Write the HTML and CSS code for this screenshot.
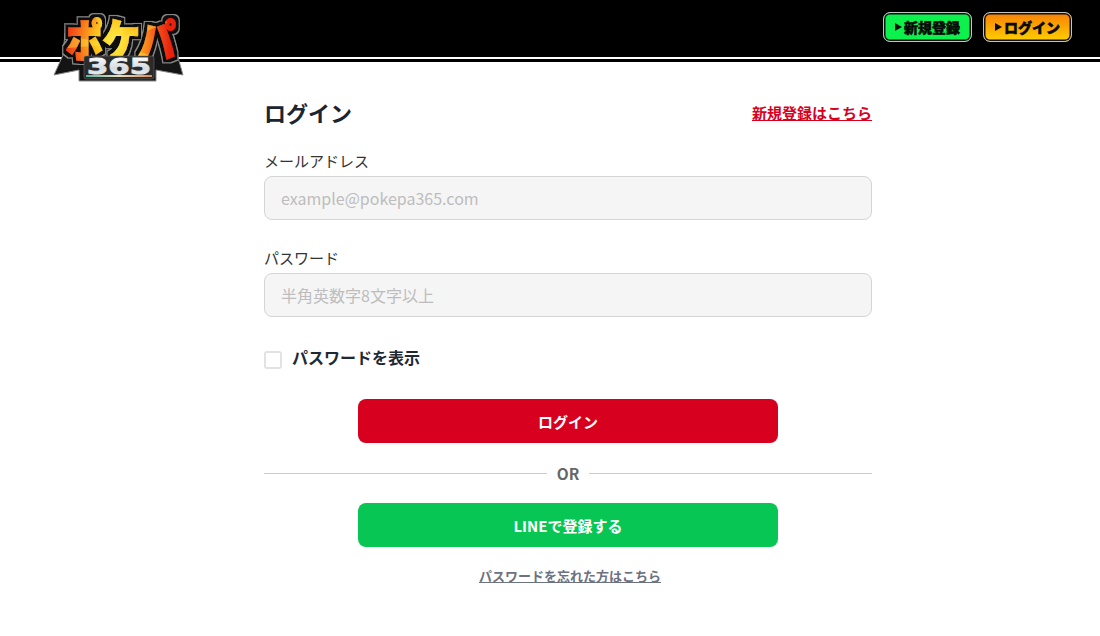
FILE: index.html
```html
<!DOCTYPE html>
<html lang="ja">
<head>
    <meta charset="UTF-8">
    <meta name="viewport" content="width=device-width, initial-scale=1.0">
    <title>ログイン</title>
    <link rel="stylesheet" href="styles.css">
</head>
<body>

    <header class="header">
        <a class="logo" href="#">
            <svg width="132" height="84" viewBox="0 0 132 84">
                <defs>
                    <pattern id="burst" patternUnits="userSpaceOnUse" width="132" height="84">
                        <rect width="132" height="84" fill="url(#burstBase)"/>
                        <path d="M62 36 L30 0 L44 0 Z M62 36 L72 0 L84 0 Z M62 36 L108 8 L114 18 Z M62 36 L116 50 L110 60 Z M62 36 L78 84 L64 84 Z M62 36 L30 84 L18 78 Z M62 36 L4 40 L6 28 Z" fill="#ffe23d" opacity="0.45"/>
                    </pattern>
                    <radialGradient id="burstBase" gradientUnits="userSpaceOnUse" cx="62" cy="34" r="56">
                        <stop offset="0" stop-color="#fff04a"/>
                        <stop offset="0.35" stop-color="#fdc51e"/>
                        <stop offset="0.7" stop-color="#f7601a"/>
                        <stop offset="1" stop-color="#e8200f"/>
                    </radialGradient>
                    <linearGradient id="numFill" x1="0" y1="0" x2="0" y2="1">
                        <stop offset="0" stop-color="#ffffff"/>
                        <stop offset="0.55" stop-color="#d6dde2"/>
                        <stop offset="1" stop-color="#f4f4f4"/>
                    </linearGradient>
                    <linearGradient id="rainbow" x1="0" y1="0" x2="1" y2="0">
                        <stop offset="0" stop-color="#5fb6a0"/>
                        <stop offset="0.5" stop-color="#e9e1c0"/>
                        <stop offset="1" stop-color="#d98a5a"/>
                    </linearGradient>
                    <filter id="logoOutline" x="-10%" y="-10%" width="120%" height="120%">
                        <feMorphology in="SourceAlpha" operator="dilate" radius="3.5" result="outerShape"/>
                        <feFlood flood-color="#8a8a8a"/>
                        <feComposite in2="outerShape" operator="in" result="outer"/>
                        <feMorphology in="SourceAlpha" operator="dilate" radius="2.6" result="innerShape"/>
                        <feFlood flood-color="#111"/>
                        <feComposite in2="innerShape" operator="in" result="inner"/>
                        <feMerge>
                            <feMergeNode in="outer"/>
                            <feMergeNode in="inner"/>
                            <feMergeNode in="SourceGraphic"/>
                        </feMerge>
                    </filter>
                </defs>
                <path class="logo-base" d="M1 74 L10 54 L12 32 L120 32 L126 60 L130 74 L103 69 L103 80 L26 80 L26 69 Z"/>
                <g filter="url(#logoOutline)">
                    <text class="logo-text" x="13" y="47" transform="scale(1 1.2)" fill="url(#burst)" stroke="url(#burst)">ポケパ</text>
                </g>
                <rect x="31" y="55" width="70" height="23" rx="2" fill="#2b2b2b" stroke="#777" stroke-width="0.5"/>
                <rect x="33" y="74" width="66" height="2" fill="url(#rainbow)"/>
                <text class="logo-num" x="34" y="73" textLength="64" lengthAdjust="spacingAndGlyphs" fill="url(#numFill)" stroke="url(#numFill)">365</text>
            </svg>
        </a>
        <nav class="header-nav">
            <a class="head-btn head-btn-green" href="#"><span class="arrow"></span>新規登録</a>
            <a class="head-btn head-btn-orange" href="#"><span class="arrow"></span>ログイン</a>
        </nav>
    </header>

    <main class="container">
        <div class="title-row">
            <h1>ログイン</h1>
            <a class="register-link" href="#">新規登録はこちら</a>
        </div>

        <label class="field-label" for="email">メールアドレス</label>
        <input class="text-input" type="text" id="email" placeholder="example@pokepa365.com">

        <label class="field-label" for="password">パスワード</label>
        <input class="text-input" type="password" id="password" placeholder="半角英数字8文字以上">

        <label class="show-pass">
            <input type="checkbox" id="show">
            <span>パスワードを表示</span>
        </label>

        <button class="btn btn-login">ログイン</button>

        <div class="divider"><span>OR</span></div>

        <button class="btn btn-line">LINEで登録する</button>

        <a class="forgot" href="#">パスワードを忘れた方はこちら</a>
    </main>

</body>
</html>
```

FILE: styles.css
```css
* {
    box-sizing: border-box;
}
body {
    margin: 0;
    font-family: "Noto Sans CJK JP", "Noto Sans", sans-serif;
    color: #1f2933;
    background-color: #fff;
}
.header {
    height: 62px;
    background: #000;
    display: flex;
    justify-content: flex-end;
    position: relative;
}
.header::after {
    content: "";
    position: absolute;
    left: 0;
    right: 0;
    top: 57px;
    height: 2px;
    background: #fff;
}
.logo {
    position: absolute;
    left: 53px;
    top: 1px;
    z-index: 2;
}
.logo svg {
    display: block;
    overflow: visible;
}
.logo-base {
    fill: #141414;
    stroke: #8a8a8a;
    stroke-width: 1;
}
.logo-text {
    font-family: "Noto Sans CJK JP", sans-serif;
    font-weight: 900;
    font-size: 37px;
    stroke-width: 1.6px;
}
.logo-num {
    font-family: "DejaVu Sans", sans-serif;
    font-weight: 700;
    font-size: 21px;
    stroke-width: 0.8px;
}
.header-nav {
    display: flex;
    gap: 11px;
    padding: 12px 28px 0 0;
    height: 42px;
    box-sizing: content-box;
}
.head-btn {
    width: 89px;
    height: 30px;
    display: flex;
    align-items: center;
    justify-content: center;
    gap: 2px;
    border: 1px solid #c4c4c4;
    border-radius: 7px;
    box-shadow: inset 0 0 0 1.5px #111;
    color: #0a0a0a;
    font-size: 14px;
    font-weight: 900;
    -webkit-text-stroke: 0.5px #0a0a0a;
    text-decoration: none;
}
.head-btn-green {
    background: #0cf14c;
}
.head-btn-orange {
    background: linear-gradient(#f77f05, #ffd000);
}
.arrow {
    width: 0;
    height: 0;
    border-left: 7px solid #0a0a0a;
    border-top: 4px solid transparent;
    border-bottom: 4px solid transparent;
}
.container {
    width: 608px;
    margin-left: 264px;
    padding-top: 33px;
    display: flex;
    flex-direction: column;
}
.title-row {
    display: flex;
    justify-content: space-between;
    align-items: center;
    height: 36px;
    margin-top: -1px;
}
h1 {
    margin: 0;
    font-size: 22px;
    font-weight: 700;
    color: #1a2433;
}
.register-link {
    font-size: 15px;
    font-weight: 700;
    color: #d7001f;
}
.field-label {
    font-size: 15px;
    line-height: 22px;
    color: #333;
    margin-top: 20px;
}
.text-input {
    height: 44px;
    margin-top: 4px;
    margin-bottom: 8px;
    padding: 0 16px;
    background: #f5f5f5;
    border: 1px solid #d5d5d5;
    border-radius: 8px;
    font-family: inherit;
    font-size: 16px;
}
.text-input + .field-label {
    margin-top: 19px;
}
.text-input::placeholder {
    color: #bdbdbd;
}
.show-pass {
    display: flex;
    align-items: center;
    gap: 10px;
    height: 24px;
    margin-top: 20px;
    margin-bottom: 2px;
    font-size: 16px;
    font-weight: 700;
}
.show-pass input {
    appearance: none;
    width: 18px;
    height: 18px;
    margin: 5px 0 0;
    border: 2px solid #e2e2e2;
    border-radius: 3px;
    background: #fff;
}
.btn {
    display: block;
    width: 420px;
    height: 44px;
    margin: 0 auto;
    border: none;
    border-radius: 8px;
    color: #fff;
    font-family: inherit;
    font-size: 15px;
    font-weight: 700;
}
.btn-login {
    background: #d7001f;
    margin-top: 28px;
}
.btn-line {
    background: #08c654;
}
.divider {
    display: flex;
    align-items: center;
    gap: 10px;
    height: 60px;
    color: #666;
    font-size: 15.5px;
    font-weight: 700;
}
.divider::before,
.divider::after {
    content: "";
    flex: 1;
    height: 1px;
    background: #ccc;
}
.forgot {
    align-self: center;
    margin-top: 19px;
    margin-left: 4px;
    font-size: 13px;
    font-weight: 700;
    color: #6b7280;
}
```
